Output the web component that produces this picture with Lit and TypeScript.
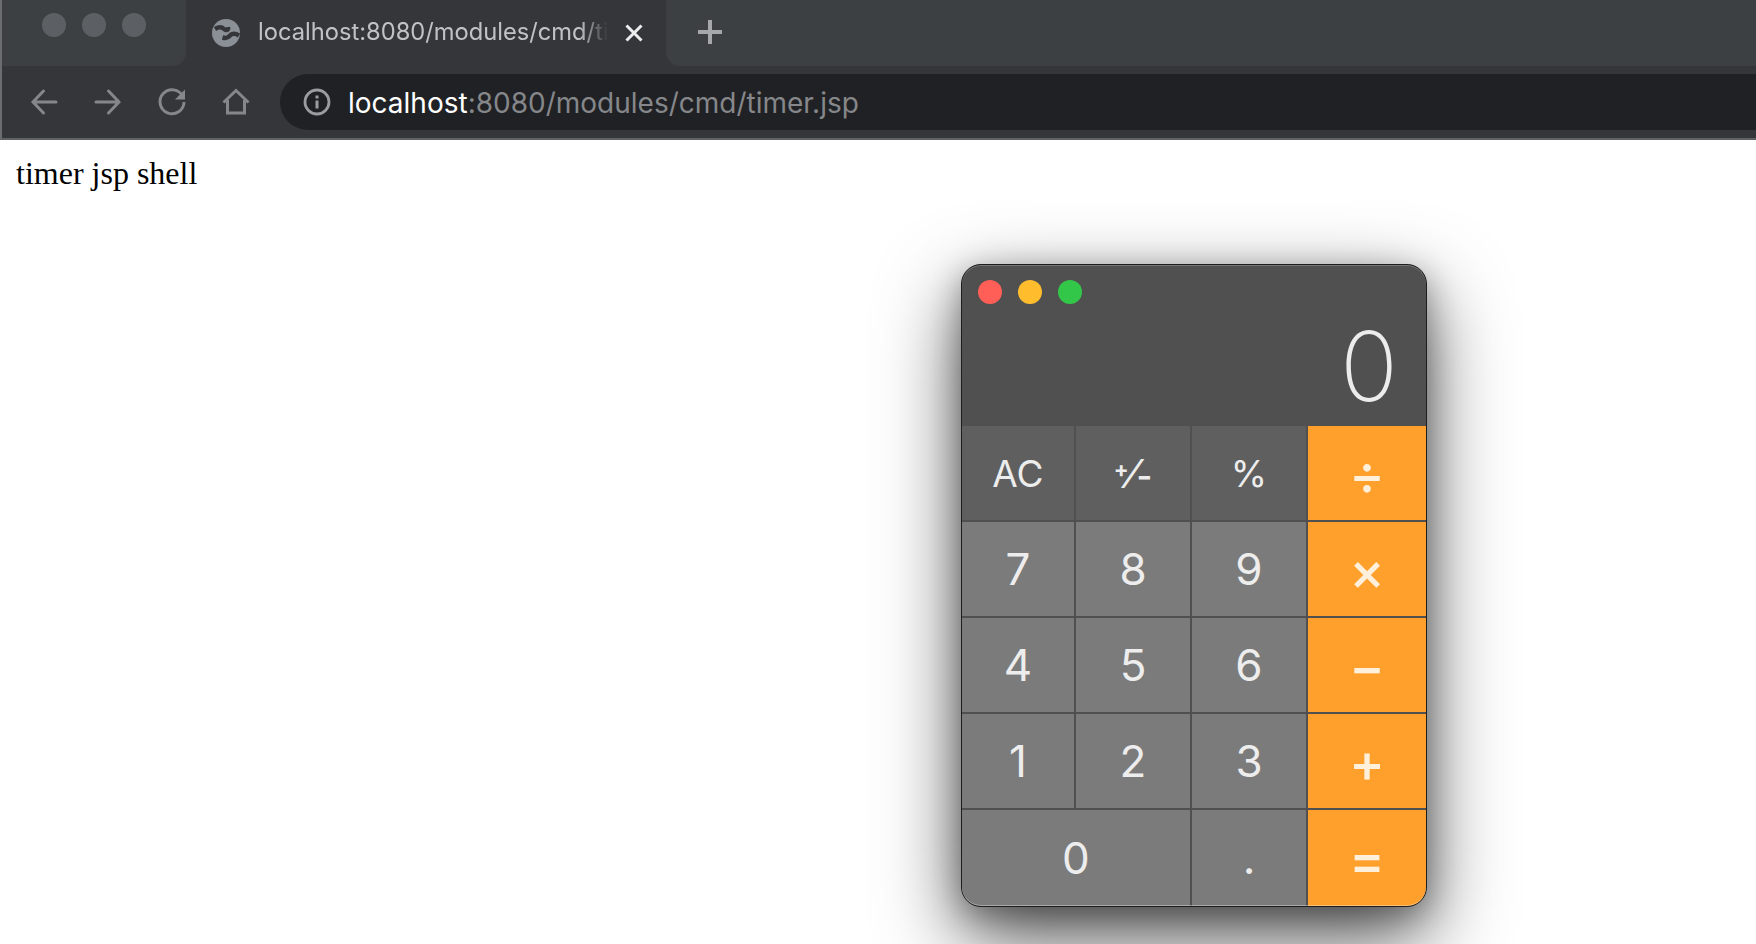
import { LitElement, html, css, svg } from "lit";
import { customElement } from "lit/decorators.js";

type Key = { label: string; kind: string; wide?: boolean };

const KEYS: Key[] = [
  { label: "AC", kind: "fn" },
  { label: "+/-", kind: "fn pm" },
  { label: "%", kind: "fn" },
  { label: "÷", kind: "op" },
  { label: "7", kind: "num" },
  { label: "8", kind: "num" },
  { label: "9", kind: "num" },
  { label: "×", kind: "op" },
  { label: "4", kind: "num" },
  { label: "5", kind: "num" },
  { label: "6", kind: "num" },
  { label: "−", kind: "op" },
  { label: "1", kind: "num" },
  { label: "2", kind: "num" },
  { label: "3", kind: "num" },
  { label: "+", kind: "op" },
  { label: "0", kind: "num", wide: true },
  { label: ".", kind: "num" },
  { label: "=", kind: "op" },
];

@customElement("app-root")
export class AppRoot extends LitElement {
  static styles = css`
    :host {
      display: block;
      position: relative;
      width: 1756px;
      height: 944px;
      overflow: hidden;
      background: #fff;
      font-family: Inter, "Liberation Sans", sans-serif;
    }
    .browser {
      background: #35363a;
      border-left: 2px solid #6a6c6f;
      border-bottom: 2px solid #606265;
    }
    .strip {
      display: flex;
      height: 66px;
    }
    .strip-left {
      width: 184px;
      background: #3c4043;
      border-bottom-right-radius: 14px;
      display: flex;
      align-items: flex-start;
      gap: 16px;
      padding: 13px 0 0 40px;
      box-sizing: border-box;
    }
    .light {
      width: 24px;
      height: 24px;
      border-radius: 50%;
      background: #5c6064;
    }
    .tab {
      width: 480px;
      display: flex;
      align-items: center;
      padding: 0 0 0 25px;
      box-sizing: border-box;
      color: #c0c2c5;
      font-size: 23.700px;
      background: #35363a;
    }
    .tab-title {
      width: 350px;
      margin-left: 17px;
      white-space: nowrap;
      -webkit-mask-image: linear-gradient(to right, #000 92%, transparent 100%);
      mask-image: linear-gradient(to right, #000 92%, transparent 100%);
      line-height: 32px;
      margin-top: -2px;
    }
    .tab-close {
      margin-left: 17px;
      display: flex;
    }
    .strip-right {
      flex: 1;
      background: #3c4043;
      border-bottom-left-radius: 14px;
      padding: 20px 0 0 32px;
      box-sizing: border-box;
    }
    .toolbar {
      height: 72px;
      display: flex;
      align-items: center;
      padding-left: 27px;
      box-sizing: border-box;
    }
    .nav {
      display: flex;
      align-items: center;
      width: 64px;
    }
    .omnibox {
      flex: 1;
      margin-left: -5px;
      height: 56px;
      background: #202124;
      border-radius: 28px 0 0 28px;
      display: flex;
      align-items: center;
      padding-left: 22px;
      font-size: 28px;
      color: #85878a;
    }
    .url {
      margin-left: 16px;
      padding-top: 1px;
      white-space: nowrap;
    }
    .url b {
      font-weight: 400;
      color: #fff;
    }
    .page-text {
      margin: 0;
      padding: 15px 0 0 16px;
      font-family: "Liberation Serif", serif;
      font-size: 32px;
      line-height: 36px;
      color: #000;
    }
    .calc {
      position: absolute;
      left: 961px;
      top: 264px;
      width: 466px;
      height: 643px;
      box-sizing: border-box;
      border: 1px solid #1e1e1e;
      border-radius: 20px;
      background: #505050;
      overflow: hidden;
      box-shadow: 0 30px 80px rgba(0, 0, 0, 0.68), 0 8px 30px rgba(0, 0, 0, 0.3);
    }
    .calc::after {
      content: "";
      position: absolute;
      inset: 0;
      border-radius: 19px;
      box-shadow: inset 0 1px 0 rgba(255, 255, 255, 0.22), inset 0 -1px 0 rgba(255, 255, 255, 0.35);
      pointer-events: none;
    }
    .head {
      height: 161px;
      box-sizing: border-box;
      padding: 15px 28px 0 16px;
      display: flex;
      flex-direction: column;
    }
    .lights {
      display: flex;
      gap: 16px;
    }
    .lights span {
      width: 24px;
      height: 24px;
      border-radius: 50%;
    }
    .red { background: #ff5f57; }
    .yellow { background: #ffbd2e; }
    .green { background: #32c748; }
    .display {
      align-self: flex-end;
      margin-top: 12px;
      font-weight: 200;
      font-size: 96px;
      line-height: 100px;
      color: #ececec;
    }
    .keys {
      display: grid;
      grid-template-columns: 112px 114px 114px 118px;
      grid-template-rows: 94px 94px 94px 94px 1fr;
      gap: 2px;
      height: 480px;
    }
    .key {
      display: flex;
      align-items: center;
      justify-content: center;
      color: #ededed;
    }
    .num {
      background: #7b7b7b;
      font-size: 44px;
      font-weight: 420;
    }
    .fn {
      background: #5f5f5f;
      font-size: 37px;
      font-weight: 420;
    }
    .pm {
      display: block;
      text-align: center;
      line-height: 86px;
      white-space: nowrap;
    }
    .pm-plus {
      font-size: 22px;
      font-weight: 700;
      vertical-align: 11px;
    }
    .pm-slash {
      font-size: 40px;
    }
    .pm-minus {
      font-size: 34px;
      font-weight: 600;
    }
    .op {
      background: #ff9f2c;
      font-size: 54px;
      font-weight: 500;
      color: #fff0dc;
      padding-top: 2px;
      box-sizing: border-box;
    }
    .wide {
      grid-column: span 2;
    }
  `;

  private back = svg`<svg width="30" height="30" viewBox="0 0 30 30" fill="none" stroke="#85878a" stroke-width="3" stroke-linecap="round"><path d="M27 15H4M14.500 4 4 15 14.500 26"/></svg>`;
  private forward = svg`<svg width="30" height="30" viewBox="0 0 30 30" fill="none" stroke="#85878a" stroke-width="3" stroke-linecap="round"><path d="M3 15H26M15.500 4 26 15 15.500 26"/></svg>`;
  private reload = svg`<svg width="30" height="30" viewBox="0 0 30 30"><path d="M25.800 9.500A12 12 0 1 0 27 15" fill="none" stroke="#85878a" stroke-width="3"/><path d="M28 2.500V12.500H18Z" fill="#85878a"/></svg>`;
  private home = svg`<svg width="30" height="30" viewBox="0 0 30 30" fill="none" stroke="#85878a" stroke-width="3"><path d="M2.500 15.500 15 3.500 27.500 15.500M6.500 13V26H23.500V13"/></svg>`;
  private info = svg`<svg width="30" height="30" viewBox="0 0 30 30"><circle cx="15" cy="15" r="12" fill="none" stroke="#9a9ca0" stroke-width="2.800"/><rect x="13.500" y="13.500" width="3" height="8" fill="#9a9ca0"/><rect x="13.500" y="8.500" width="3" height="3" fill="#9a9ca0"/></svg>`;
  private globe = svg`<svg width="30" height="30" viewBox="0 0 30 30"><circle cx="15" cy="15" r="14" fill="#8b9097"/><path d="M4 11C8 8.500 11 9 13 11C15 13 17.500 12 17 9M28 17.500C24 15 20.500 15.500 18.500 18C17 20 15 20.500 11.500 19.500" fill="none" stroke="#35363a" stroke-width="4.500"/><path d="M17 1.500C20 2 23 3.500 25 6L20 9.500C18 8 16 5 17 1.500Z" fill="#8b9097"/></svg>`;
  private close = svg`<svg width="18" height="18" viewBox="0 0 18 18" stroke="#ededed" stroke-width="3"><path d="M1.500 1.500 16.500 16.500M16.500 1.500 1.500 16.500"/></svg>`;
  private plus = svg`<svg width="24" height="24" viewBox="0 0 24 24" stroke="#a6a8ab" stroke-width="4"><path d="M12 0V24M0 12H24"/></svg>`;

  private keyLabel(k: Key) {
    if (k.label === "+/-") {
      return html`<span class="pm-plus">+</span><span class="pm-slash">⁄</span><span class="pm-minus">-</span>`;
    }
    return k.label;
  }

  render() {
    return html`
      <div class="browser">
        <div class="strip">
          <div class="strip-left">
            <span class="light"></span><span class="light"></span><span class="light"></span>
          </div>
          <div class="tab">
            ${this.globe}
            <span class="tab-title">localhost:8080/modules/cmd/ti</span>
            <span class="tab-close">${this.close}</span>
          </div>
          <div class="strip-right">${this.plus}</div>
        </div>
        <div class="toolbar">
          <span class="nav">${this.back}</span>
          <span class="nav">${this.forward}</span>
          <span class="nav">${this.reload}</span>
          <span class="nav">${this.home}</span>
          <div class="omnibox">
            ${this.info}
            <span class="url"><b>localhost</b>:8080/modules/cmd/timer.jsp</span>
          </div>
        </div>
      </div>
      <p class="page-text">timer jsp shell</p>
      <div class="calc">
        <div class="head">
          <div class="lights">
            <span class="red"></span><span class="yellow"></span><span class="green"></span>
          </div>
          <div class="display">0</div>
        </div>
        <div class="keys">
          ${KEYS.map(
            (k) => html`<div class="key ${k.kind} ${k.wide ? "wide" : ""}">${this.keyLabel(k)}</div>`
          )}
        </div>
      </div>
    `;
  }
}
